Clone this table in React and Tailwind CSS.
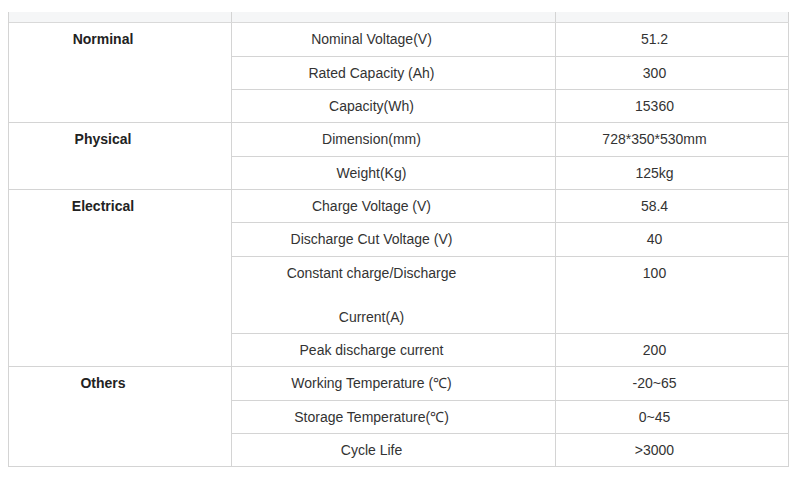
import React from "react";

const groups = [
    {
        name: "Norminal",
        rows: [
            { label: "Nominal Voltage(V)", value: "51.2", h: "h-[34px]" },
            { label: "Rated Capacity (Ah)", value: "300", h: "h-[33px]" },
            { label: "Capacity(Wh)", value: "15360", h: "h-[33px]" },
        ],
    },
    {
        name: "Physical",
        rows: [
            { label: "Dimension(mm)", value: "728*350*530mm", h: "h-[34px]" },
            { label: "Weight(Kg)", value: "125kg", h: "h-[33px]" },
        ],
    },
    {
        name: "Electrical",
        rows: [
            { label: "Charge Voltage (V)", value: "58.4", h: "h-[33px]" },
            { label: "Discharge Cut Voltage (V)", value: "40", h: "h-[34px]" },
            {
                label: "Constant charge/Discharge",
                label2: "Current(A)",
                value: "100",
                h: "h-[77px]",
            },
            { label: "Peak discharge current", value: "200", h: "h-[33px]" },
        ],
    },
    {
        name: "Others",
        rows: [
            { label: "Working Temperature (℃)", value: "-20~65", h: "h-[34px]" },
            { label: "Storage Temperature(℃)", value: "0~45", h: "h-[33px]" },
            { label: "Cycle Life", value: ">3000", h: "h-[33px]" },
        ],
    },
];

const SpecTable = () => {
    return (
        <div className="ml-[8px] mt-[12px] w-[781px] border-l border-[#d4d4d4] text-[14px] leading-[20px] text-[#333]">
            {/* header strip, top is cut off */}
            <div className="flex h-[11px] border-b border-[#d9d9d9] bg-[#f5f6f7]">
                <div className="w-[223px] border-r border-[#d4d4d4]" />
                <div className="w-[324px] border-r border-[#d4d4d4]" />
                <div className="w-[233px] border-r border-[#d4d4d4]" />
            </div>

            {groups.map((g) => (
                <div key={g.name} className="flex">
                    <div className="w-[223px] border-r border-b border-[#d4d4d4] pt-[6px] pr-[34px] text-center font-bold text-[#222]">
                        {g.name}
                    </div>
                    <div className="flex flex-col">
                        {g.rows.map((r) => (
                            <div
                                key={r.label}
                                className={`flex ${r.h} border-b border-[#d4d4d4]`}
                            >
                                <div className="w-[324px] border-r border-[#d4d4d4] pt-[6px] pr-[44px] text-center">
                                    <div>{r.label}</div>
                                    {r.label2 && (
                                        <div className="mt-[24px]">{r.label2}</div>
                                    )}
                                </div>
                                <div className="w-[233px] border-r border-[#d4d4d4] pt-[6px] pr-[35px] text-center">
                                    {r.value}
                                </div>
                            </div>
                        ))}
                    </div>
                </div>
            ))}
        </div>
    );
};

export default function App() {
    return (
        <div
            className="h-[478px] w-[800px] bg-white"
            style={{ fontFamily: '"Liberation Sans", Arial, sans-serif' }}
        >
            <SpecTable />
        </div>
    );
}
